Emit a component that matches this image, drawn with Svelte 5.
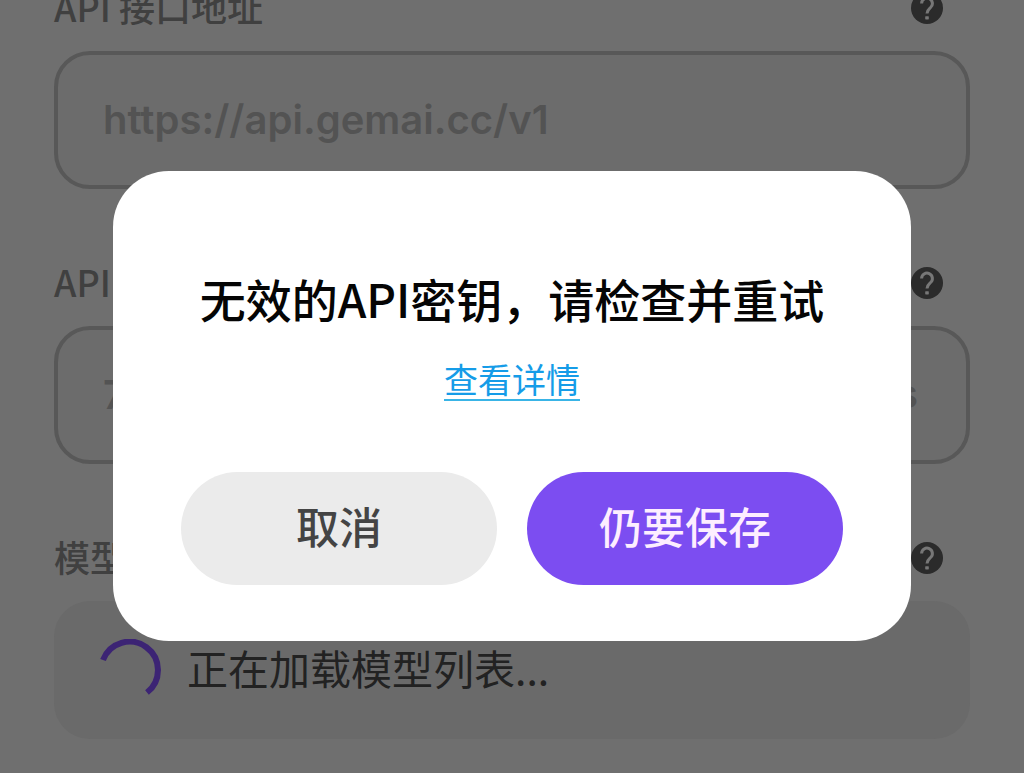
<script lang="ts">
  let apiUrl = $state("https://api.gemai.cc/v1");
  let apiKey = $state("7");
  let open = $state(true);

  function close() {
    open = false;
  }
</script>

{#snippet help(topic: string)}
  <button class="help" type="button" aria-label={topic}>
    <svg viewBox="0 0 32 32" aria-hidden="true">
      <circle cx="16" cy="16" r="16" />
      <path d="M10.6 11.4a5.4 5.4 0 1 1 9 4.1c-2 1.8-3.6 2.8-3.6 6" />
      <rect x="14.2" y="24.2" width="3.6" height="3.2" rx="0.6" />
    </svg>
  </button>
{/snippet}

<main class="settings">
  <section class="field">
    <div class="field-head">
      <label for="api-url">API 接口地址</label>
      {@render help("API 接口地址")}
    </div>
    <input id="api-url" type="text" bind:value={apiUrl} />
  </section>

  <section class="field">
    <div class="field-head">
      <label for="api-key">API 密钥</label>
      {@render help("API 密钥")}
    </div>
    <div class="key-box">
      <input id="api-key" type="text" bind:value={apiKey} />
      <span class="key-tail">s</span>
    </div>
  </section>

  <section class="field">
    <div class="field-head">
      <span class="label">模型</span>
      {@render help("模型")}
    </div>
    <div class="loading" role="status">
      <svg class="spinner" viewBox="0 0 62 62" aria-hidden="true">
        <path d="M3 21A28.4 28.4 0 1 1 47 53.5" />
      </svg>
      <span>正在加载模型列表...</span>
    </div>
  </section>
</main>

{#if open}
  <div class="overlay">
    <div class="dialog" role="alertdialog" aria-modal="true" aria-labelledby="dialog-title">
      <h2 id="dialog-title">无效的API密钥，请检查并重试</h2>
      <a href="#details">查看详情</a>
      <div class="actions">
        <button class="btn" type="button" onclick={close}>取消</button>
        <button class="btn primary" type="button" onclick={close}>仍要保存</button>
      </div>
    </div>
  </div>
{/if}

<style>
  :global(body) {
    background: #6f6f6f;
    font-family: "Noto Sans CJK SC", sans-serif;
    overflow: hidden;
  }

  .settings {
    display: flex;
    flex-direction: column;
    gap: 66px;
    padding: 0 54px;
    margin-top: -20px;
  }

  .field-head {
    display: flex;
    align-items: center;
    justify-content: space-between;
    height: 56px;
    padding-right: 27px;
    margin-bottom: 15px;
  }

  label,
  .label {
    padding-bottom: 4px;
    color: #404040;
    font-size: 36px;
    font-weight: 500;
    line-height: 56px;
  }

  .help {
    width: 32px;
    height: 32px;
    padding: 0;
    background: none;
    border: none;
    border-radius: 50%;
    cursor: pointer;
  }

  .help svg {
    display: block;
  }

  .help circle {
    fill: #2b2b2b;
  }

  .help path {
    fill: none;
    stroke: #777;
    stroke-width: 3;
  }

  .help rect {
    fill: #777;
  }

  input {
    display: block;
    box-sizing: border-box;
    width: 100%;
    height: 138px;
    padding: 0 45px 2px;
    background: #6c6c6c;
    border: 4px solid #585858;
    border-radius: 36px;
    color: #535353;
    font-family: Inter, "Noto Sans CJK SC", sans-serif;
    font-size: 40px;
    font-weight: 600;
    outline: none;
  }

  .key-box {
    position: relative;
  }

  .key-tail {
    position: absolute;
    top: 0;
    right: 52px;
    color: #535353;
    font-family: Inter, sans-serif;
    font-size: 40px;
    font-weight: 600;
    line-height: 136px;
  }

  .loading {
    display: flex;
    align-items: center;
    gap: 25px;
    height: 138px;
    padding: 0 46px;
    background: #6a6a6a;
    border-radius: 36px;
    color: #222;
    font-size: 41px;
  }

  .loading span {
    padding-bottom: 6px;
  }

  .spinner {
    width: 62px;
    height: 62px;
  }

  .spinner path {
    fill: none;
    stroke: #3c2474;
    stroke-width: 6;
  }

  .overlay {
    position: fixed;
    inset: 0;
    display: flex;
    justify-content: center;
    align-items: center;
    padding: 38px 113px 0;
  }

  .dialog {
    display: flex;
    flex-direction: column;
    align-items: center;
    box-sizing: border-box;
    width: 100%;
    padding: 93px 64px 56px;
    background: #fff;
    border-radius: 56px;
  }

  h2 {
    margin: 0;
    color: #050505;
    font-size: 46px;
    font-weight: 500;
    line-height: 68px;
    white-space: nowrap;
  }

  a {
    margin-top: 26px;
    border-bottom: 2px solid #39b4e6;
    color: #159ce8;
    font-size: 34px;
    line-height: 41px;
    text-decoration: none;
  }

  .actions {
    display: flex;
    gap: 30px;
    box-sizing: border-box;
    width: 100%;
    padding: 0 4px;
    margin-top: 71px;
  }

  .btn {
    flex: 1;
    height: 113px;
    padding: 0 0 6px;
    background: #ebebeb;
    border: none;
    border-radius: 57px;
    color: #444;
    font-family: inherit;
    font-size: 43px;
    font-weight: 500;
    cursor: pointer;
  }

  .btn.primary {
    background: #7c4df1;
    color: #fdeeff;
  }
</style>
